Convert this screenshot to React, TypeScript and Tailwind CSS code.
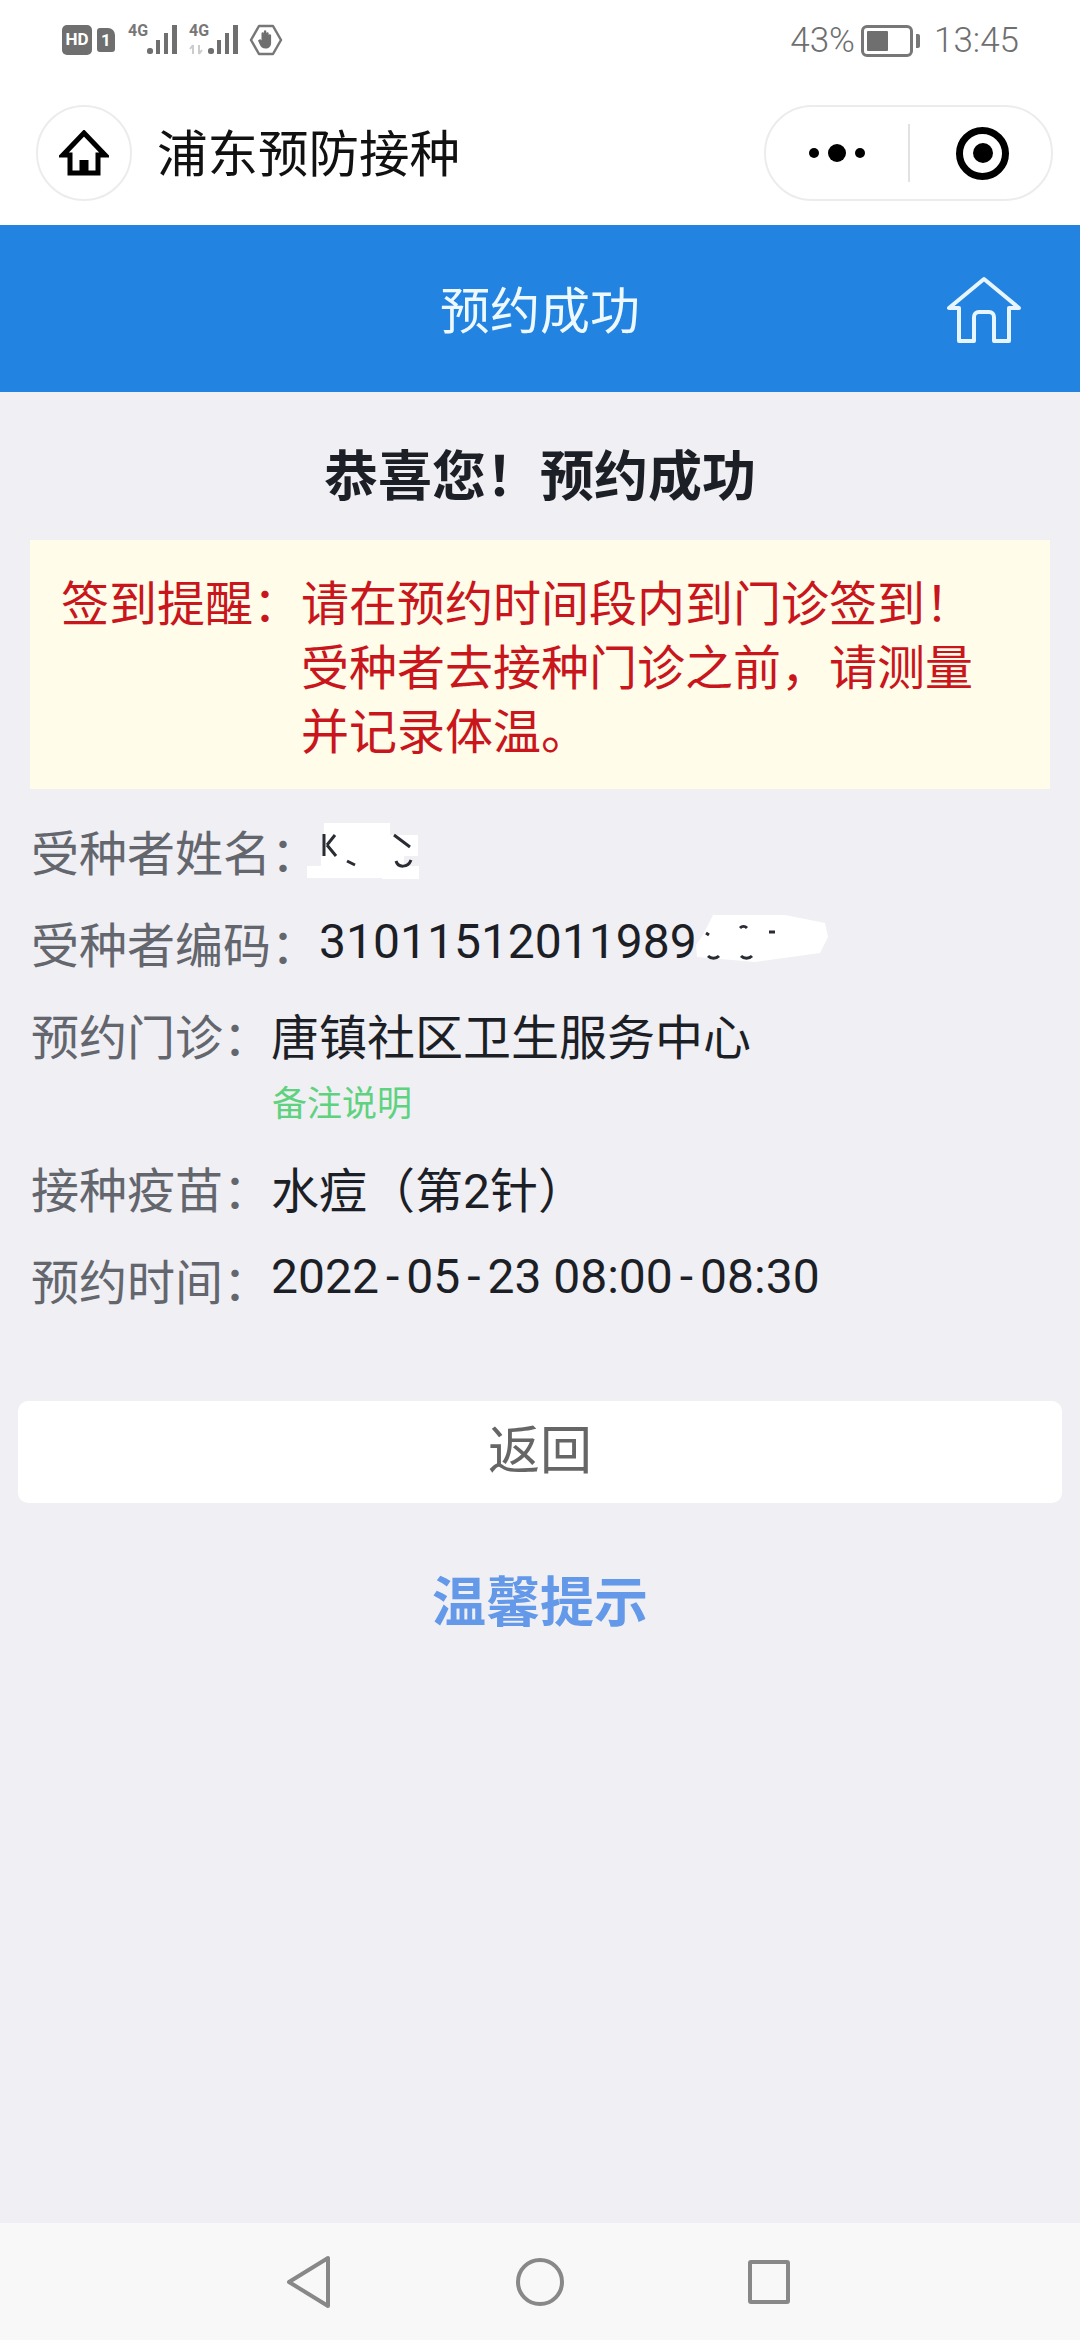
const cjk = "font-['Roboto','Noto_Sans_CJK_SC',sans-serif]";

// full-width punctuation
const COLON = "\uFF1A";
const BANG = "\uFF01";
const COMMA = "\uFF0C";
const LP = "\uFF08";
const RP = "\uFF09";

function SignalIcon({ arrows }: { arrows?: boolean }) {
  return (
    <div className="relative h-[30px] w-[50px]">
      <span className="absolute left-0 top-[-3px] font-['Roboto',sans-serif] text-[16px] leading-[18px] font-bold text-[#777]">4G</span>
      <svg className="absolute left-0 top-0" width="50" height="30" viewBox="0 0 50 30" fill="#6f6f6f">
        <rect x="19" y="23" width="6" height="6" rx="2.500" />
        <rect x="28" y="15" width="4" height="14" />
        <rect x="36" y="8" width="4" height="21" />
        <rect x="44" y="0" width="5" height="29" />
        {arrows && <path d="M4 29V20M4 20l-3 4M10 20v9M10 29l3-4" stroke="#ccc" strokeWidth="2" fill="none" />}
      </svg>
    </div>
  );
}

function StatusBar() {
  return (
    <div className="flex h-[75px] items-start justify-between pl-[62px] pr-[61px] pt-[24px] font-['Roboto',sans-serif] text-[#6f6f6f]">
      <div className="flex items-center">
        <span className="flex h-[30px] w-[30px] items-center justify-center rounded-[5px] bg-[#6f6f6f] text-[17px] font-bold text-white">HD</span>
        <span className="ml-[5px] flex h-[24px] w-[18px] items-center justify-center rounded-[3px] rounded-tr-[7px] bg-[#6f6f6f] text-[17px] font-bold leading-none text-white">1</span>
        <div className="ml-[13px]">
          <SignalIcon />
        </div>
        <div className="ml-[11px]">
          <SignalIcon arrows />
        </div>
        <svg className="ml-[10px]" width="34" height="32" viewBox="0 0 34 32" fill="none">
          <path d="M10 2h14l8 14-8 14H10L2 16z" stroke="#777" strokeWidth="2.500" strokeLinejoin="round" />
          <path d="M9 16.500l1.500-1c.8-.5 1.500 0 2 1V9.500a1.200 1.200 0 012.400 0V7.500a1.200 1.200 0 012.400 0v2a1.200 1.200 0 012.400 0v2a1.200 1.200 0 012.400 0v7.500c0 3.500-2.200 5.500-5.500 5.500-3 0-4.800-1.500-5.800-4z" fill="#6f6f6f" />
        </svg>
      </div>
      <div className="flex items-center text-[35px] leading-[34px] font-light">
        <span>43%</span>
        <div className="ml-[6px] flex h-[32px] w-[52px] items-center rounded-[6px] border-[3px] border-[#777] p-[3px]">
          <div className="h-full w-[21px] rounded-[1px] bg-[#6f6f6f]" />
        </div>
        <div className="ml-[3px] h-[14px] w-[4px] rounded-r-[2px] bg-[#777]" />
        <span className="ml-[14px]">13:45</span>
      </div>
    </div>
  );
}

function NavBar() {
  return (
    <div className="flex h-[150px] items-start justify-between pl-[36px] pr-[27px] pt-[30px]">
      <div className="flex items-center">
        <div className="flex h-[96px] w-[96px] items-center justify-center rounded-full border-2 border-[#ececec]">
          <svg width="50" height="46" viewBox="0 0 50 46" fill="none">
            <path d="M25 3L4 25h7v18h28V25h7z" stroke="#000" strokeWidth="5" strokeLinejoin="miter" />
            <rect x="20.500" y="30" width="9" height="12" fill="#000" />
          </svg>
        </div>
        <span className={`ml-[25px] pt-[4px] ${cjk} text-[50.500px] leading-[60px] text-[#111]`}>浦东预防接种</span>
      </div>
      <div className="flex h-[96px] w-[289px] items-center rounded-full border-2 border-[#ececec]">
        <div className="flex w-[142px] items-center justify-center gap-[9px]">
          <span className="h-[10px] w-[10px] rounded-full bg-black" />
          <span className="h-[18px] w-[18px] rounded-full bg-black" />
          <span className="h-[10px] w-[10px] rounded-full bg-black" />
        </div>
        <div className="h-[58px] w-[2px] bg-[#e2e2e2]" />
        <div className="flex flex-1 items-center justify-center pl-[4px]">
          <div className="flex h-[53px] w-[53px] items-center justify-center rounded-full border-[7px] border-black">
            <span className="h-[20px] w-[20px] rounded-full bg-black" />
          </div>
        </div>
      </div>
    </div>
  );
}

function Row({ label, children }: { label: string; children?: React.ReactNode }) {
  return (
    <div className="relative flex h-[92px] items-center whitespace-nowrap pl-[31px] text-[48px] leading-[60px]">
      <span className="text-[#63666d]">{label}{COLON}</span>
      <span className="text-[#1d1f27]">{children}</span>
    </div>
  );
}

function Dash() {
  return <span className="mx-[7px]">-</span>;
}

export default function App() {
  return (
    <div className={`flex h-[2340px] w-[1080px] flex-col overflow-hidden bg-[#efeff4] ${cjk}`}>
      <div className="bg-white">
        <StatusBar />
        <NavBar />
      </div>

      <div className="relative flex h-[167px] items-center justify-center bg-[#2283e0]">
        <span className="pt-[6px] text-[50px] leading-[60px] text-[#eef8ff]">预约成功</span>
        <svg className="absolute right-[58px] top-[50px]" width="76" height="70" viewBox="0 0 76 70" fill="none">
          <path d="M38 4L3 33h10v33h15V42c0-3 2-5 5-5h10c3 0 5 2 5 5v24h15V33h10z" stroke="#e6f5ff" strokeWidth="4" strokeLinejoin="round" />
        </svg>
      </div>

      <div className="flex h-[148px] items-center justify-center pt-[24px]">
        <span className="text-[54px] leading-[60px] font-bold text-[#1d1f27]">恭喜您{BANG}预约成功</span>
      </div>

      <div className="mx-[30px] flex h-[249px] bg-[#fffcea] pl-[31px] pt-[33px] text-[48px] leading-[64px] text-[#c8161c]">
        <span className="shrink-0">签到提醒{COLON}</span>
        <span className="w-[700px]">
          请在预约时间段内到门诊签到{BANG}
          <br />
          受种者去接种门诊之前{COMMA}请测量
          <br />
          并记录体温。
        </span>
      </div>

      <div className="mt-[20px]">
        <Row label="受种者姓名">
          <svg className="absolute left-[307px] top-[14px]" width="112" height="56" viewBox="0 0 112 56">
            <path d="M17 0h66v12h28v21H97v10h15v13H75v-1H0V43h14V33h3z" fill="#fff" />
            <path d="M17 11v22M20 22l8-10M20 22l9 11M87 12l16 12M89 38c2 7 12 7 15-1M40 38l8 4" stroke="#2a2c33" strokeWidth="3" fill="none" />
          </svg>
        </Row>
        <Row label="受种者编码">
          <span className="relative -top-[5px]">31011512011989</span>
          <svg className="absolute left-[695px] top-[14px]" width="135" height="50" viewBox="0 0 135 50">
            <path d="M18 0H90L130 8L133 22L125 38L60 47L2 42L1 30L8 20Z" fill="#fff" />
            <path d="M11 18l3 2M45 13c2-2 5-2 7 0M74 17h6M13 41c3 3 8 3 11 0M46 41c3 3 8 3 11 0" stroke="#2a2c33" strokeWidth="3" fill="none" />
          </svg>
        </Row>
        <Row label="预约门诊">唐镇社区卫生服务中心</Row>
        <div className="pl-[272px] text-[35px] leading-[40px] text-[#5fd27f]">备注说明</div>
        <div className="mt-[21px]">
          <Row label="接种疫苗">水痘{LP}第2针{RP}</Row>
          <Row label="预约时间">
            <span className="relative -top-[7px]">
              2022<Dash />05<Dash />23 08:00<Dash />08:30
            </span>
          </Row>
        </div>
      </div>

      <button className="mx-[18px] mt-[71px] flex h-[102px] shrink-0 items-center justify-center rounded-[10px] bg-white text-[52px] text-[#666]">
        返回
      </button>

      <div className="mt-[66px] text-center text-[54px] leading-[70px] font-bold text-[#6399e8]">温馨提示</div>

      <div className="mt-auto flex h-[117px] items-center bg-[#f8f8f8]">
        <svg className="ml-[286px]" width="46" height="54" viewBox="0 0 46 54" fill="none">
          <path d="M42 3v48L3 27z" stroke="#888" strokeWidth="4" strokeLinejoin="round" />
        </svg>
        <div className="ml-[184px] h-[48px] w-[48px] rounded-full border-[4px] border-[#888]" />
        <div className="ml-[184px] h-[44px] w-[42px] rounded-[3px] border-[4px] border-[#888]" />
      </div>
    </div>
  );
}
